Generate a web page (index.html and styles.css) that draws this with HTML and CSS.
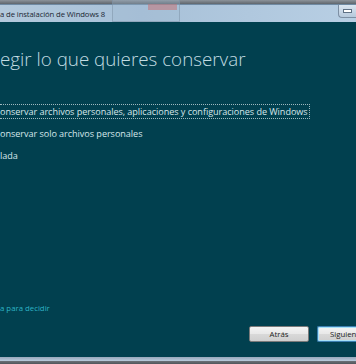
FILE: index.html
```html
<!DOCTYPE html>
<html lang="es">
<head>
    <meta charset="UTF-8">
    <title>Programa de instalación de Windows 8</title>
    <link rel="stylesheet" href="styles.css">
</head>
<body>
    <div class="desk-strip"></div>

    <!-- Title bar (window is cropped on the left and right) -->
    <div class="titlebar">
        <span class="title-text">a de instalación de Windows 8</span>
        <div class="ghost">
            <span class="ghost-close"></span>
        </div>
        <div class="min-btn"><span></span></div>
    </div>

    <div class="content">
        <h1 class="heading">egir lo que quieres conservar</h1>

        <div class="options">
            <div class="option"><span class="focused">onservar archivos personales, aplicaciones y configuraciones de Windows</span></div>
            <div class="option"><span>onservar solo archivos personales</span></div>
            <div class="option"><span>lada</span></div>
        </div>

        <div class="spacer"></div>

        <a class="help-link" href="#">a para decidir</a>

        <div class="buttons">
            <button class="btn">Atrás</button>
            <button class="btn btn-default">Siguien</button>
        </div>
    </div>

    <div class="bottom-frame"></div>
</body>
</html>
```

FILE: styles.css
```css
html, body {
    margin: 0;
    padding: 0;
}

body {
    width: 356px;
    height: 364px;
    overflow: hidden;
    background-color: #6e7378;
    font-family: "Open Sans", "Noto Sans", sans-serif;
    display: flex;
    flex-direction: column;
}

.desk-strip {
    height: 4px;
    background: linear-gradient(to bottom, #8c939a, #5f666d);
}

/* Title bar */
.titlebar {
    position: relative;
    height: 17px;
    background: linear-gradient(to right, #b3c9dc 0%, #a8c1d8 40%, #b8cfe4 100%);
    border-top: 1px solid #6f8aa3;
    display: flex;
    align-items: center;
}

.title-text {
    font-size: 7.7px;
    letter-spacing: -0.1px;
    color: #1b2733;
    white-space: nowrap;
}

.ghost {
    position: absolute;
    left: 112px;
    top: -5px;
    width: 66px;
    height: 21px;
    border: 1px solid rgba(120, 140, 160, 0.45);
    border-top: none;
    background: rgba(160, 185, 210, 0.3);
}

.ghost-close {
    position: absolute;
    right: 2px;
    top: 4px;
    width: 29px;
    height: 6px;
    background: rgba(200, 110, 110, 0.5);
}

.min-btn {
    position: absolute;
    right: 0;
    top: 0;
    width: 17px;
    height: 12px;
    border: 1px solid #7d8fa3;
    border-right: none;
    border-top: none;
    border-radius: 0 0 0 4px;
    background: linear-gradient(to bottom, #dbe6f1, #b6c9dc);
    display: flex;
    align-items: center;
    justify-content: center;
}

.min-btn span {
    width: 7px;
    height: 2px;
    background: #ffffff;
    border: 1px solid #5f7185;
}

/* Content */
.content {
    flex: 1;
    background-color: #01404f;
    display: flex;
    flex-direction: column;
    padding-bottom: 15px;
}

.heading {
    margin: 25px 0 0 0;
    font-size: 18.8px;
    font-weight: 300;
    line-height: 24px;
    color: #c2dce2;
    white-space: nowrap;
}

.options {
    margin-top: 35px;
    display: flex;
    flex-direction: column;
    gap: 10px;
}

.option {
    font-size: 9.1px;
    letter-spacing: -0.05px;
    color: #d6e6ea;
    line-height: 12px;
    white-space: nowrap;
}

.option span {
    border: 1px dotted transparent;
    border-left: none;
    padding-right: 1px;
}

.option .focused {
    border-color: #9fb8be;
}

.spacer {
    flex: 1;
}

.help-link {
    font-size: 7.8px;
    color: #2db3c4;
    text-decoration: none;
}

.buttons {
    margin-top: 13px;
    display: flex;
    justify-content: flex-end;
    gap: 8px;
}

.btn {
    width: 60px;
    height: 16px;
    padding: 0;
    font-family: "Open Sans", "Noto Sans", sans-serif;
    font-size: 7.8px;
    color: #1d1d1d;
    border: 1px solid #7a7a7a;
    border-radius: 2px;
    background: linear-gradient(to bottom, #f4f4f4 0%, #e8e8e8 50%, #d9d9d9 51%, #cfcfcf 100%);
}

.btn-default {
    width: 39px;
    padding-left: 12px;
    text-align: left;
    border-right: none;
    border-radius: 2px 0 0 2px;
    border-color: #3c7fb1;
    box-shadow: inset 1px 1px 0 #a6e1f8, inset 0 -1px 0 #a6e1f8;
}

/* Bottom frame */
.bottom-frame {
    height: 7px;
    background: linear-gradient(to bottom, #96a8bb 0%, #b4c6d8 50%, #6a6f75 60%, #50555a 100%);
}
```
